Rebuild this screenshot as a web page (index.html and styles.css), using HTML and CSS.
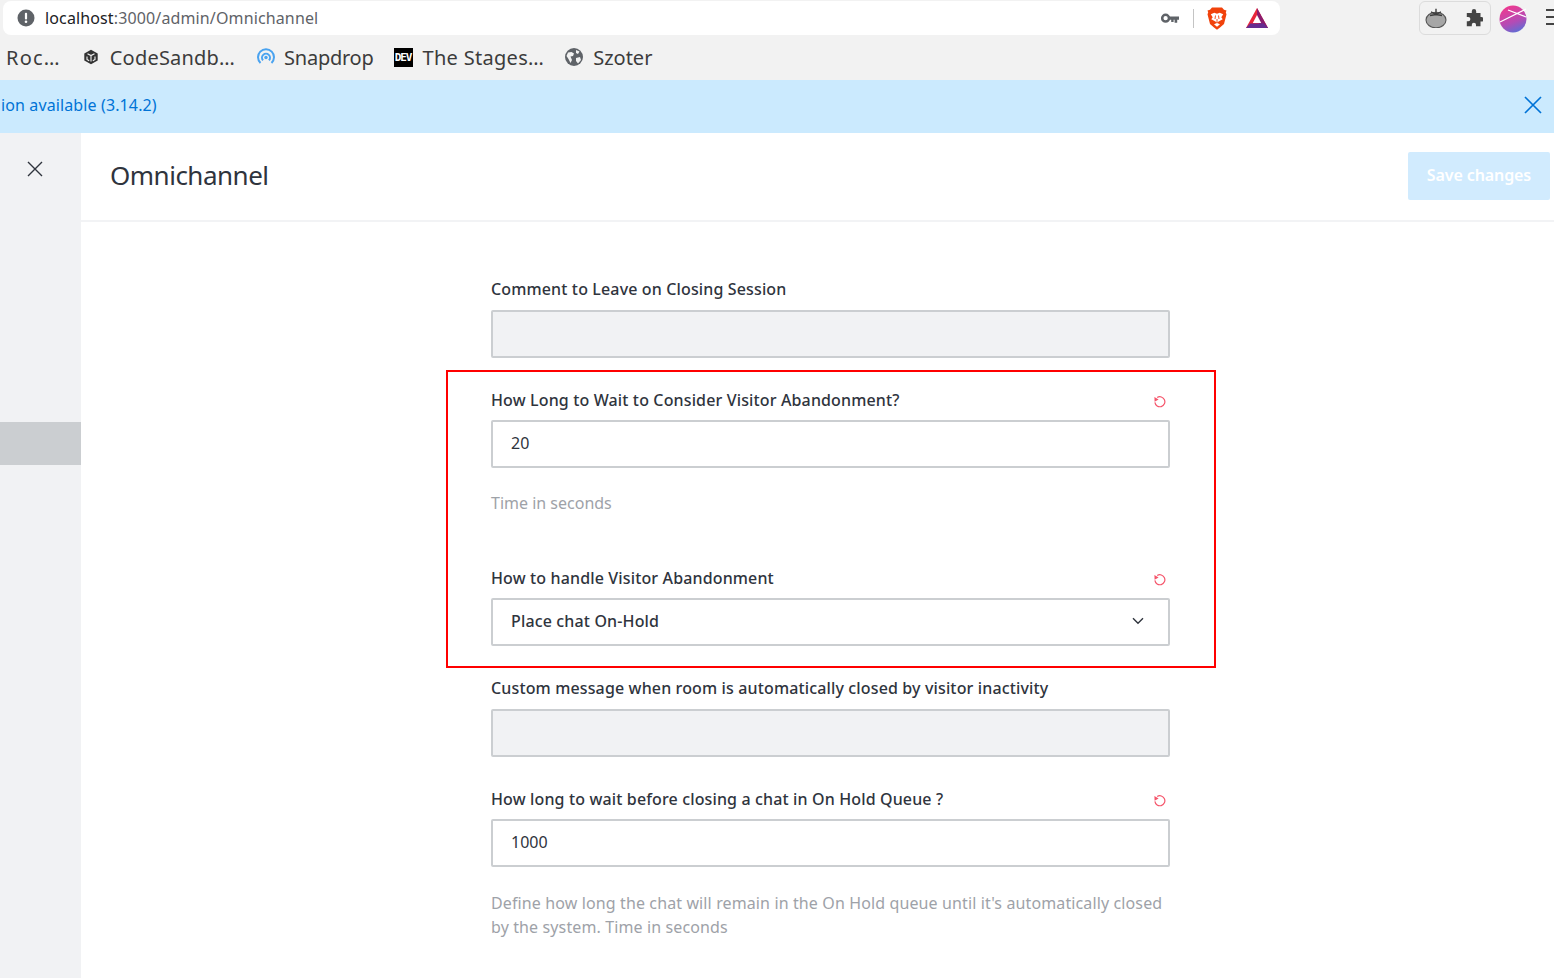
FILE: index.html
```html
<!DOCTYPE html>
<html lang="en">
<head>
<meta charset="utf-8">
<title>Omnichannel</title>
<link rel="stylesheet" href="styles.css">
</head>
<body>
<div class="chrome">
  <div class="toolbar">
    <div class="urlbar">
      <svg class="i-info" viewBox="0 0 18 18" width="18" height="18"><circle cx="9" cy="9" r="8.5" fill="#5f6368"/><rect x="7.9" y="3.8" width="2.2" height="6.6" rx="1" fill="#fff"/><circle cx="9" cy="12.8" r="1.3" fill="#fff"/></svg>
      <span class="url"><span class="host">localhost</span>:3000/admin/Omnichannel</span>
      <span class="url-actions">
        <svg viewBox="0 0 18 11" width="18" height="11"><circle cx="4.6" cy="5.200" r="3.400" fill="none" stroke="#5f6368" stroke-width="2.500"/><path d="M8 3.600h10v3.200h-1.800v3h-2.600v-3h-1v2.200h-2.400V6.800H8z" fill="#5f6368"/></svg>
        <i class="url-sep"></i>
        <svg class="i-brave" viewBox="0 0 20 23" width="20" height="23"><path d="M5 .5h10l2 2.200 2.500.7-.7 2.100.7 1.800-2.500 9.600-4 3.700L10 22.800l-3-2.200-4-3.700L.5 7.300l.7-1.800-.7-2.100L3 2.700z" fill="#f1420b"/><path d="M3.800 7.300 7.300 5.800 10 6.800l2.700-1 3.500 1.500-1.900 3 1.400 1.900-3.200 1.700L10 15.500l-2.500-1.600-3.200-1.700 1.400-1.900zM10 16l3 1.200L10 19.800l-3-2.600z" fill="#fff"/><path d="M8.500 8.500 8 12M11.500 8.500 12 12M10 12v3" stroke="#f1420b" stroke-width=".9"/></svg>
        <svg class="i-bat" viewBox="0 0 22 20" width="22" height="20"><path d="M11 0 22 20H0z" fill="#e8263a"/><path d="M11 0 22 20H14.500L11 10z" fill="#8a1c6e"/><path d="M0 20 4.300 15.500H17.700L22 20z" fill="#662d91"/><path d="M11 7 15.200 15H6.800z" fill="#fff"/></svg>
      </span>
    </div>
    <div class="ext-group">
      <svg viewBox="0 0 22 20" width="22" height="20"><ellipse cx="11" cy="12" rx="10" ry="7.800" fill="#a6a6a6" stroke="#555" stroke-width="1.100"/><path d="M11 .8v5.400M6 3.800l5 2.700 5-2.700M5 7.500l6-1 6 1" fill="none" stroke="#3c3c3c" stroke-width="1.400"/></svg>
      <svg viewBox="0 0 18 18" width="18" height="18"><path d="M6.800 2.200a2.200 2.200 0 0 1 4.400 0V4h4.300v4h1a2.300 2.300 0 0 1 0 4.600h-1v4.600H11v-1.400a2.100 2.100 0 0 0-4.200 0v1.400H1.800v-4.900h1.400a2.200 2.200 0 0 0 0-4.400H1.800V4h5z" fill="#444"/></svg>
    </div>
    <svg class="avatar" viewBox="0 0 28 28" width="28" height="28"><defs><linearGradient id="av" x1="0.3" y1="0" x2="0.7" y2="1"><stop offset="0" stop-color="#f0388e"/><stop offset="0.6" stop-color="#b44bb5"/><stop offset="1" stop-color="#5b6fd6"/></linearGradient></defs><circle cx="14" cy="14" r="13.500" fill="url(#av)"/><path d="M1 17 27 4M9 5l18 7" stroke="#fff" stroke-width="1.200" fill="none"/></svg>
    <span class="hamburger"><i></i><i></i><i></i></span>
  </div>
  <div class="bookmarks">
    <span class="bm bm-first">Roc…</span>
    <span class="bm bm-cs"><svg viewBox="0 0 16 16" width="16" height="16"><path d="M8 .8 14.700 4.500v7L8 15.200 1.300 11.500v-7z" fill="#333"/><path d="M4.500 4.700 8 6.600l3.500-1.900M8 6.600v5.800M4 7.500v3l2.200 1.200M12 7.500v3l-2.200 1.200" fill="none" stroke="#f2f2f2" stroke-width="1.100"/></svg><span class="t-cs">CodeSandb…</span></span>
    <span class="bm bm-sd"><svg viewBox="0 0 18 18" width="18" height="18"><g fill="none" stroke="#4aa3f0" stroke-width="2"><path d="M3.500 15a8 8 0 1 1 11 0"/><path d="M6 12.400a4 4 0 1 1 6 0"/></g><circle cx="9" cy="9.500" r="1.700" fill="#4aa3f0"/></svg><span class="t-sd">Snapdrop</span></span>
    <span class="bm bm-dev"><span class="dev">DEV</span><span class="t-dev">The Stages…</span></span>
    <span class="bm bm-sz"><svg viewBox="0 0 18 18" width="18" height="18"><circle cx="9" cy="9" r="9" fill="#5f6368"/><path d="M3 4.500 6.500 4 9 5.500 8 8 5.500 8.500 7 12 5.500 15 3.500 11 1.500 8zM11 2l3.500 1.500L13 6l-2-1zM11 10l4-1 1 3-3 3.500L11 13z" fill="#f2f2f2"/></svg>Szoter</span>
  </div>
</div>
<div class="banner">
  <span>ion available (3.14.2)</span>
  <svg viewBox="0 0 18 18" width="18" height="18"><path d="M1 1l16 16M17 1 1 17" stroke="#0073d6" stroke-width="1.700" fill="none"/></svg>
</div>
<div class="app">
  <aside class="sidebar">
    <svg class="side-close" viewBox="0 0 16 16" width="16" height="16"><path d="M1 1l14 14M15 1 1 15" stroke="#2f343d" stroke-width="1.400" fill="none"/></svg>
    <div class="side-active"></div>
  </aside>
  <main class="main">
    <header class="page-header">
      <h1>Omnichannel</h1>
      <button class="save" type="button">Save changes</button>
    </header>
    <div class="form">
      <section class="field field-first">
        <div class="label-row"><label>Comment to Leave on Closing Session</label></div>
        <div class="input disabled"></div>
      </section>
      <div class="highlight">
        <section class="field">
          <div class="label-row"><label>How Long to Wait to Consider Visitor Abandonment?</label>
            <svg class="reset" viewBox="0 0 12 12" width="12" height="12"><path d="M3.200 1.500A5 5 0 1 1 .9 6.400" fill="none" stroke="#f5556b" stroke-width="1.200"/><path d="M.4 1 4.600 3.400.6 5.800z" fill="#f5556b"/></svg></div>
          <div class="input">20</div>
          <p class="hint">Time in seconds</p>
        </section>
        <section class="field field-select">
          <div class="label-row"><label>How to handle Visitor Abandonment</label>
            <svg class="reset" viewBox="0 0 12 12" width="12" height="12"><path d="M3.200 1.500A5 5 0 1 1 .9 6.400" fill="none" stroke="#f5556b" stroke-width="1.200"/><path d="M.4 1 4.600 3.400.6 5.800z" fill="#f5556b"/></svg></div>
          <div class="input select">Place chat On-Hold
            <svg viewBox="0 0 12 8" width="12" height="8"><path d="M1 1.200 6 6.200 11 1.200" fill="none" stroke="#2f343d" stroke-width="1.400"/></svg></div>
        </section>
      </div>
      <section class="field field-custom">
        <div class="label-row"><label>Custom message when room is automatically closed by visitor inactivity</label></div>
        <div class="input disabled"></div>
      </section>
      <section class="field field-last">
        <div class="label-row"><label>How long to wait before closing a chat in On Hold Queue ?</label>
          <svg class="reset" viewBox="0 0 12 12" width="12" height="12"><path d="M3.200 1.500A5 5 0 1 1 .9 6.400" fill="none" stroke="#f5556b" stroke-width="1.200"/><path d="M.4 1 4.600 3.400.6 5.800z" fill="#f5556b"/></svg></div>
        <div class="input">1000</div>
        <p class="hint">Define how long the chat will remain in the On Hold queue until it's automatically closed by the system. Time in seconds</p>
      </section>
    </div>
  </main>
</div>
</body>
</html>
```
FILE: styles.css
```css
* { box-sizing: border-box; }
html, body { margin: 0; height: 978px; overflow: hidden; background: #fff; }
body { font-family: "Noto Sans", "Open Sans", sans-serif; color: #2f343d; font-size: 16px; width: 1554px; }

.chrome { height: 80px; background: #f2f2f2; }
.toolbar { height: 40px; display: flex; align-items: flex-start; padding: 1px 0 0 3px; }
.toolbar > * { flex: none; }
.urlbar { width: 1277px; height: 34px; background: #fff; border-radius: 8px; display: flex; align-items: center; padding-left: 14px; }
.url { margin-left: 10px; font-size: 16px; color: #5f6368; letter-spacing: 0.13px; }
.host { color: #202124; }
.url-actions { margin-left: auto; display: flex; align-items: center; padding-right: 12px; }
.url-sep { width: 1px; height: 19px; background: #c4c4c4; margin: 0 13px 0 14px; }
.i-brave { margin-right: 19px; }
.ext-group { margin-left: 139px; width: 72px; height: 34px; border: 1px solid #dcdcdc; border-radius: 6px; display: flex; align-items: center; justify-content: space-between; padding: 0 7px 0 5px; }
.avatar { margin: 4px 0 0 8px; }
.hamburger { margin: 8px 0 0 19px; display: flex; flex-direction: column; gap: 5px; }
.hamburger i { display: block; width: 14px; height: 2px; background: #444; }

.bookmarks { height: 40px; display: flex; align-items: center; padding: 0 0 6px 6px; font-size: 20px; color: #3c3c3c; }
.bm { display: inline-flex; align-items: center; white-space: nowrap; flex: none; }
.bm-first { letter-spacing: 1.2px; }
.bm-cs { margin-left: 22px; }
.bm-cs svg { margin-right: 11px; }
.t-cs { letter-spacing: 0.2px; }
.bm-sd { margin-left: 22px; }
.bm-sd svg { margin-right: 9px; }
.t-sd { letter-spacing: -0.25px; }
.bm-dev { margin-left: 20px; }
.t-dev { letter-spacing: 0.3px; }
.bm-sz { margin-left: 21px; }
.bm-sz svg, .dev { margin-right: 10px; }
.dev { width: 19px; height: 19px; background: #000; color: #fff; font: 700 11px/19px "DejaVu Sans Mono", monospace; letter-spacing: -1.1px; text-align: center; }

.banner { height: 53px; background: #cbeafe; color: #0073d6; display: flex; align-items: center; justify-content: space-between; padding: 0 12px 3px 1px; font-size: 16px; letter-spacing: 0.12px; }

.app { display: flex; height: 845px; }
.sidebar { width: 81px; background: #f1f2f4; flex: none; padding-top: 28px; }
.side-close { display: block; margin-left: 27px; }
.side-active { margin-top: 245px; height: 43px; background: #cbced1; }
.main { flex: 1; min-width: 0; }
.page-header { height: 89px; border-bottom: 2px solid #f2f3f5; display: flex; align-items: center; justify-content: space-between; padding: 0 4px 2px 29px; }
h1 { margin: 0 0 2px; font-size: 26px; font-weight: 400; line-height: 36px; letter-spacing: -0.5px; color: #2f343d; }
.save { width: 142px; height: 48px; background: #d1ebfe; border: 0; border-radius: 2px; color: #fff; font: 600 16px "Noto Sans", sans-serif; letter-spacing: -0.1px; padding: 0 0 2px; }

.form { width: 770px; margin-left: 365px; padding-top: 56px; }
.field { padding: 0 46px 0 45px; }
.label-row { height: 21px; display: flex; justify-content: space-between; align-items: center; margin-bottom: 10px; }
.field-first .label-row, .field-custom .label-row { margin-bottom: 11px; }
label { font-size: 16px; font-weight: 500; line-height: 21px; letter-spacing: 0.14px; padding-top: 2px; color: #2f343d; }
.reset { margin: 5px 4px 0 0; }
.input { height: 48px; border: 2px solid #cbced1; border-radius: 2px; padding: 0 18px 2px; display: flex; align-items: center; font-size: 16px; color: #2f343d; }
.disabled { background: #f1f2f4; }
.select { justify-content: space-between; padding-right: 24px; font-weight: 500; letter-spacing: 0.15px; }
.hint { margin: 23px 0 0; font-size: 16px; line-height: 24px; color: #9ea2a8; }
.field-last .hint { margin-top: 24px; letter-spacing: 0.12px; }

.highlight { margin-top: 12px; border: 2px solid #f00; padding-top: 17px; padding-bottom: 20px; margin-bottom: 9px; }
.highlight .field { padding: 0 44px 0 43px; }
.highlight .field-select { margin-top: 52px; }
.field-last { margin-top: 31px; }
```
